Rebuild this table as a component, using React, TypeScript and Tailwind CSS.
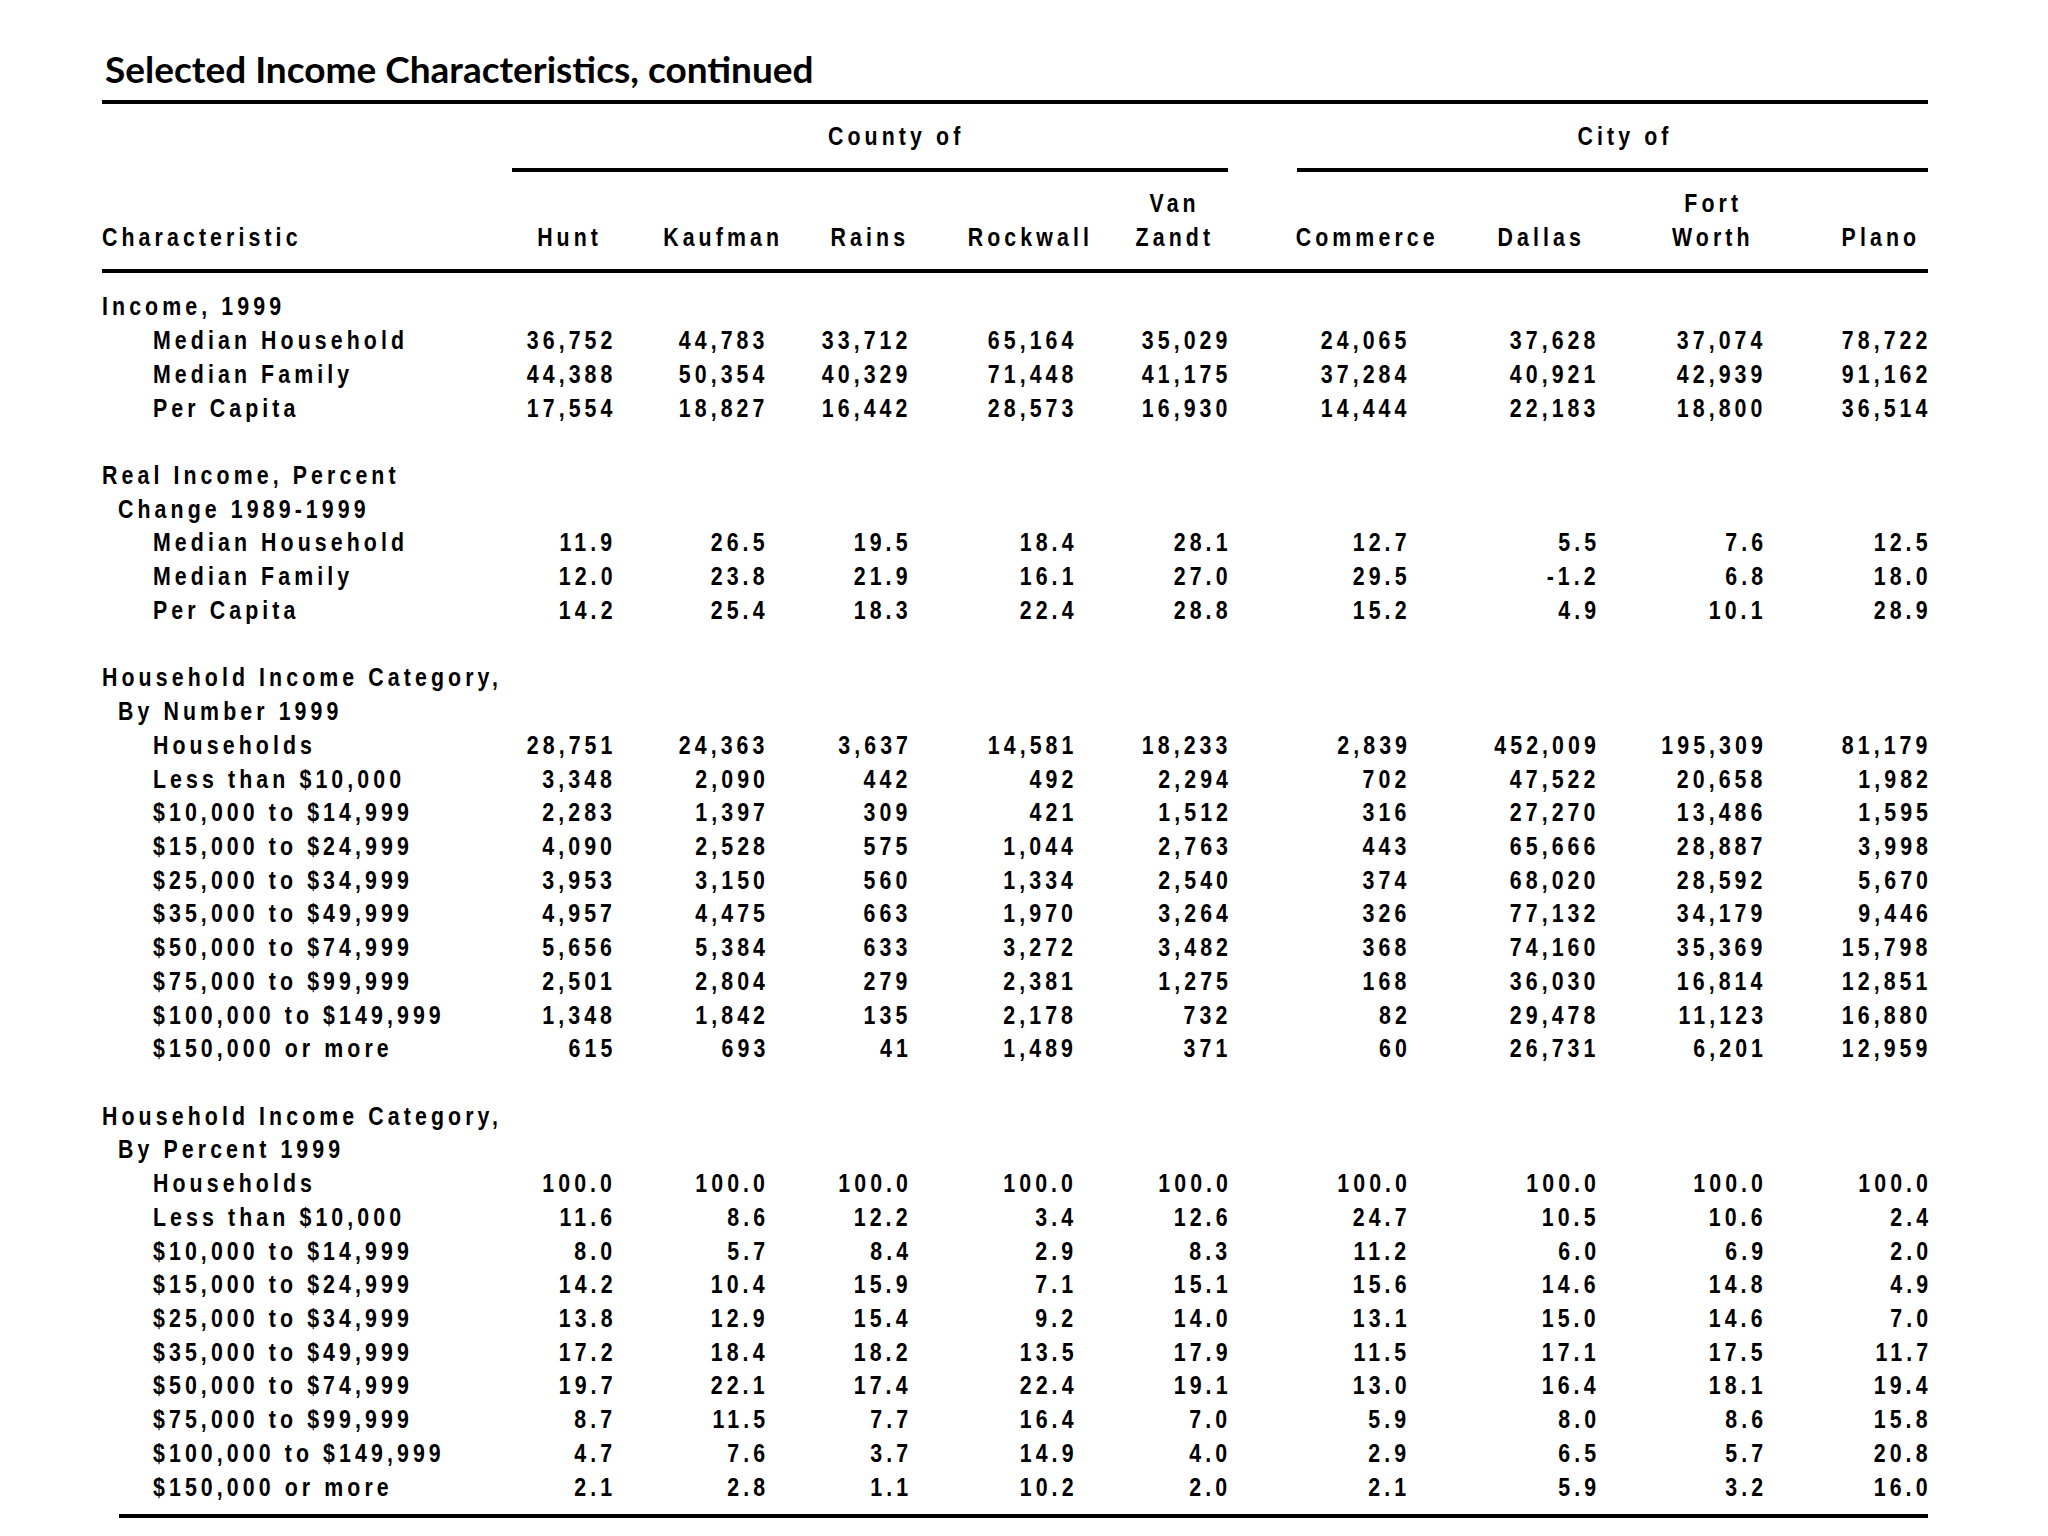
import React from 'react';

type Col = { name: string[]; hw: string };

const cols: Col[] = [
  { name: ['', 'Hunt'], hw: 'w-[86px]' },
  { name: ['', 'Kaufman'], hw: 'w-[83px]' },
  { name: ['', 'Rains'], hw: 'w-[75px]' },
  { name: ['', 'Rockwall'], hw: 'w-[87px]' },
  { name: ['Van', 'Zandt'], hw: 'w-[105px]' },
  { name: ['', 'Commerce'], hw: 'w-[79px]' },
  { name: ['', 'Dallas'], hw: 'w-[110px]' },
  { name: ['Fort', 'Worth'], hw: 'w-[100px]' },
  { name: ['', 'Plano'], hw: 'w-[94px]' },
];

type Row = { label?: string; indent?: 0 | 1 | 2; values?: string[] };

const rows: Row[] = [
  { label: 'Income, 1999', indent: 0 },
  { label: 'Median Household', indent: 2, values: ['36,752', '44,783', '33,712', '65,164', '35,029', '24,065', '37,628', '37,074', '78,722'] },
  { label: 'Median Family', indent: 2, values: ['44,388', '50,354', '40,329', '71,448', '41,175', '37,284', '40,921', '42,939', '91,162'] },
  { label: 'Per Capita', indent: 2, values: ['17,554', '18,827', '16,442', '28,573', '16,930', '14,444', '22,183', '18,800', '36,514'] },
  {},
  { label: 'Real Income, Percent', indent: 0 },
  { label: 'Change 1989-1999', indent: 1 },
  { label: 'Median Household', indent: 2, values: ['11.9', '26.5', '19.5', '18.4', '28.1', '12.7', '5.5', '7.6', '12.5'] },
  { label: 'Median Family', indent: 2, values: ['12.0', '23.8', '21.9', '16.1', '27.0', '29.5', '-1.2', '6.8', '18.0'] },
  { label: 'Per Capita', indent: 2, values: ['14.2', '25.4', '18.3', '22.4', '28.8', '15.2', '4.9', '10.1', '28.9'] },
  {},
  { label: 'Household Income Category,', indent: 0 },
  { label: 'By Number 1999', indent: 1 },
  { label: 'Households', indent: 2, values: ['28,751', '24,363', '3,637', '14,581', '18,233', '2,839', '452,009', '195,309', '81,179'] },
  { label: 'Less than $10,000', indent: 2, values: ['3,348', '2,090', '442', '492', '2,294', '702', '47,522', '20,658', '1,982'] },
  { label: '$10,000 to $14,999', indent: 2, values: ['2,283', '1,397', '309', '421', '1,512', '316', '27,270', '13,486', '1,595'] },
  { label: '$15,000 to $24,999', indent: 2, values: ['4,090', '2,528', '575', '1,044', '2,763', '443', '65,666', '28,887', '3,998'] },
  { label: '$25,000 to $34,999', indent: 2, values: ['3,953', '3,150', '560', '1,334', '2,540', '374', '68,020', '28,592', '5,670'] },
  { label: '$35,000 to $49,999', indent: 2, values: ['4,957', '4,475', '663', '1,970', '3,264', '326', '77,132', '34,179', '9,446'] },
  { label: '$50,000 to $74,999', indent: 2, values: ['5,656', '5,384', '633', '3,272', '3,482', '368', '74,160', '35,369', '15,798'] },
  { label: '$75,000 to $99,999', indent: 2, values: ['2,501', '2,804', '279', '2,381', '1,275', '168', '36,030', '16,814', '12,851'] },
  { label: '$100,000 to $149,999', indent: 2, values: ['1,348', '1,842', '135', '2,178', '732', '82', '29,478', '11,123', '16,880'] },
  { label: '$150,000 or more', indent: 2, values: ['615', '693', '41', '1,489', '371', '60', '26,731', '6,201', '12,959'] },
  {},
  { label: 'Household Income Category,', indent: 0 },
  { label: 'By Percent 1999', indent: 1 },
  { label: 'Households', indent: 2, values: ['100.0', '100.0', '100.0', '100.0', '100.0', '100.0', '100.0', '100.0', '100.0'] },
  { label: 'Less than $10,000', indent: 2, values: ['11.6', '8.6', '12.2', '3.4', '12.6', '24.7', '10.5', '10.6', '2.4'] },
  { label: '$10,000 to $14,999', indent: 2, values: ['8.0', '5.7', '8.4', '2.9', '8.3', '11.2', '6.0', '6.9', '2.0'] },
  { label: '$15,000 to $24,999', indent: 2, values: ['14.2', '10.4', '15.9', '7.1', '15.1', '15.6', '14.6', '14.8', '4.9'] },
  { label: '$25,000 to $34,999', indent: 2, values: ['13.8', '12.9', '15.4', '9.2', '14.0', '13.1', '15.0', '14.6', '7.0'] },
  { label: '$35,000 to $49,999', indent: 2, values: ['17.2', '18.4', '18.2', '13.5', '17.9', '11.5', '17.1', '17.5', '11.7'] },
  { label: '$50,000 to $74,999', indent: 2, values: ['19.7', '22.1', '17.4', '22.4', '19.1', '13.0', '16.4', '18.1', '19.4'] },
  { label: '$75,000 to $99,999', indent: 2, values: ['8.7', '11.5', '7.7', '16.4', '7.0', '5.9', '8.0', '8.6', '15.8'] },
  { label: '$100,000 to $149,999', indent: 2, values: ['4.7', '7.6', '3.7', '14.9', '4.0', '2.9', '6.5', '5.7', '20.8'] },
  { label: '$150,000 or more', indent: 2, values: ['2.1', '2.8', '1.1', '10.2', '2.0', '2.1', '5.9', '3.2', '16.0'] },
];

const gridCols =
  'grid grid-cols-[398px_112.5px_152.5px_142.7px_165.8px_154.1px_179px_189.4px_167px_165px]';

const indentClass = ['pl-0', 'pl-[16px]', 'pl-[51px]'];

// narrow (Arial Narrow-like) text: Liberation Sans squeezed horizontally
const originClass = {
  left: 'origin-left',
  right: 'origin-right',
  center: 'origin-center',
};

const N: React.FC<{ align?: 'left' | 'right' | 'center'; className?: string; children?: React.ReactNode }> = ({
  align = 'left',
  className = '',
  children,
}) => (
  <span className={`inline-block whitespace-nowrap scale-x-[0.82] ${originClass[align]} ${className}`}>{children}</span>
);

const App: React.FC = () => {
  return (
    <div className="min-h-screen bg-white text-black">
      {/* Title */}
      <div className="pl-[105px] pt-[50px]">
        <h1 className="font-['Lato',sans-serif] font-bold text-[37px] leading-none h-[36px]">
          Selected Income Characteristics, continued
        </h1>
      </div>

      <div className="ml-[102px] w-[1826px] mt-[14px] font-['Liberation_Sans',Arial,sans-serif] font-bold text-[26px] tracking-[5px]">
        <div className="h-[4px] bg-black" />

        {/* Group headings */}
        <div className="flex">
          <div className="w-[410px] shrink-0" />
          <div className="w-[716px] shrink-0">
            <div className="h-[64px] flex items-center justify-center pl-[52px]">
              <N align="center">County of</N>
            </div>
            <div className="h-[4px] bg-black" />
          </div>
          <div className="w-[69px] shrink-0" />
          <div className="w-[631px] shrink-0">
            <div className="h-[64px] flex items-center justify-center pl-[25px]">
              <N align="center">City of</N>
            </div>
            <div className="h-[4px] bg-black" />
          </div>
        </div>

        {/* Column headings */}
        <div className={`${gridCols} pt-[15px] pb-[15px]`}>
          <div className="flex flex-col">
            <div className="h-[33.73px]" />
            <div className="h-[33.73px] flex items-center">
              <N>Characteristic</N>
            </div>
          </div>
          {cols.map((c) => (
            <div key={c.name.join(' ')} className="flex justify-end">
              <div className={`${c.hw} flex flex-col items-center`}>
                {c.name.map((line, i) => (
                  <div key={i} className="h-[33.73px] flex items-center justify-center">
                    <N align="center">{line}</N>
                  </div>
                ))}
              </div>
            </div>
          ))}
        </div>
        <div className="h-[4px] bg-black" />

        {/* Body */}
        <div className="pt-[14px]">
          {rows.map((r, i) => (
            <div key={i} className={`${gridCols} h-[33.73px] items-center`}>
              <div className={indentClass[r.indent ?? 0]}>
                <N>{r.label ?? ''}</N>
              </div>
              {(r.values ?? Array(9).fill('')).map((v: string, j: number) => (
                <div key={j} className="flex justify-end">
                  <N align="right" className="mr-[-4px]">
                    {v}
                  </N>
                </div>
              ))}
            </div>
          ))}
        </div>

        <div className="mt-[13px] ml-[17px] h-[4px] bg-black" />
      </div>
    </div>
  );
};

export default App;
